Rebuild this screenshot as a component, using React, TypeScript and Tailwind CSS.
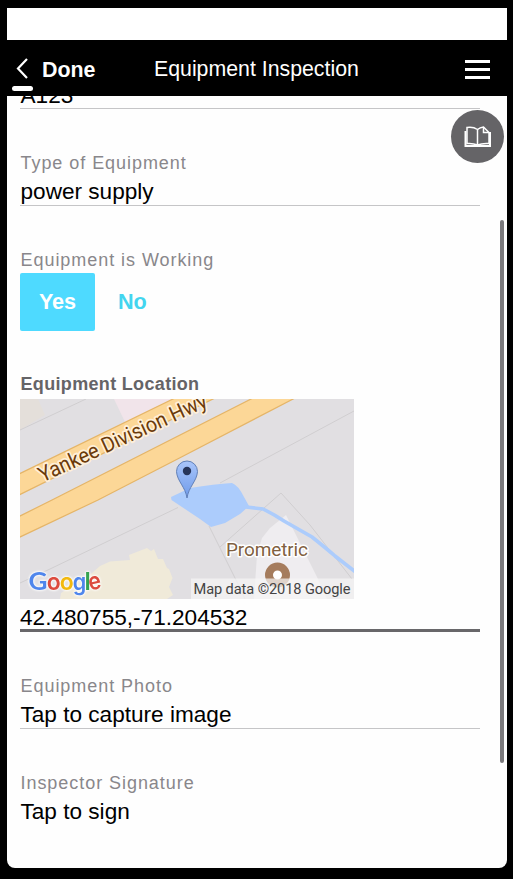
import React from "react";

function LocationMap() {
  return (
    <svg className="block h-[200px] w-[334px] shrink-0" viewBox="20 399 334 200" aria-label="Map">
      <defs>
        <linearGradient id="pin" x1="0" y1="0" x2="0" y2="1">
          <stop offset="0" stopColor="#a9c5fa" />
          <stop offset="1" stopColor="#6f9bea" />
        </linearGradient>
      </defs>
      <rect x="20" y="399" width="334" height="200" fill="#e1dfe2" />
      <path d="M20 399H38L45 415L20 430Z" fill="#e4dfda" />
      <path d="M114 399H175L125 422Z" fill="#f1e4ea" />
      <g fill="none" stroke="#d0ced0" strokeWidth="1">
        <path d="M20 430L86 399" />
        <path d="M354 411L220 483" />
        <path d="M178 507.500L50 569L20 583" />
        <path d="M209 526L237 582L245 599" />
        <path d="M220 547L281 493L310 525L352 579" />
      </g>
      <path d="M19 474L175 398H215L19 495Z" fill="#fcd797" stroke="#e5b568" strokeWidth="1.200" />
      <path d="M19 516.500L52 500L253 398H295L180 457.700L98 500L19 537.500Z" fill="#fcd797" stroke="#e5b568" strokeWidth="1.200" />
      <path d="M60 599L61 593L92 573L100 566L110 561.500L130 560L129 555L147 548L151 551L154 549L158 559L163 559L167 568L169 569L172.500 578L169 587L173 595L167 599Z" fill="#f0ead9" />
      <path d="M286 515L270 528L262 538L257 555L254 599H327L317 577Z" fill="#efedf0" />
      <path d="M171 497L190 488Q215 484 232 483Q238 485 244 497L249 506L240 514L225 523L211 527L200 519L171.500 500Z" fill="#acccfc" />
      <path d="M246 507L263 509Q275 515 284 521L312 537Q327 549 335 556L355 571.500" fill="none" stroke="#acccfc" strokeWidth="3.600" />
      <path d="M187 498C185.500 487 177 481 176.500 471.500A10.500 10.500 0 0 1 197.500 471.500C197 481 188.500 487 187 498Z" fill="url(#pin)" stroke="#6180b8" strokeWidth="1" />
      <circle cx="187" cy="471" r="4.200" fill="#27355a" />
      <text x="0" y="0" transform="translate(42.500 482.500) rotate(-24.700)" textLength="183" lengthAdjust="spacingAndGlyphs" fontFamily="Roboto, sans-serif" fontSize="21.500" fill="#6b3a0a" stroke="#fff0d8" strokeWidth="3.500" strokeLinejoin="round" paintOrder="stroke">Yankee Division Hwy</text>
      <circle cx="277.500" cy="575" r="8.500" fill="#fff" stroke="#a57c5d" strokeWidth="8" />
      <text x="226" y="556" textLength="82" fontFamily="Roboto, sans-serif" fontSize="19" fill="#80603f" stroke="#fff" strokeWidth="3" strokeLinejoin="round" paintOrder="stroke">Prometric</text>
      <rect x="191" y="578.500" width="163" height="21" fill="#f5f5f5" fillOpacity=".72" />
      <text x="193.500" y="594.300" textLength="157" fontFamily="Roboto, sans-serif" fontSize="14.600" fill="#444">Map data ©2018 Google</text>
      <g className="[filter:drop-shadow(0_0_1px_white)_drop-shadow(0_0_1px_white)]" fontFamily="Inter, sans-serif" fontSize="24" fontWeight="600">
        <text x="28.500" y="590" fill="#4f86ec" textLength="19" lengthAdjust="spacingAndGlyphs" fontFamily="Lato, sans-serif" fontSize="25.500" fontWeight="700">G</text>
        <text x="46.700" y="590" fill="#dc4b3e" textLength="14" lengthAdjust="spacingAndGlyphs">o</text>
        <text x="59.700" y="590" fill="#f2b90f" textLength="14" lengthAdjust="spacingAndGlyphs">o</text>
        <text x="72.700" y="590" fill="#4f86ec" textLength="13.500" lengthAdjust="spacingAndGlyphs">g</text>
        <text x="84.500" y="590" fill="#35a352">l</text>
        <text x="0" y="0" transform="translate(90 590.500) rotate(-12)" fill="#dc4b3e" textLength="12.500" lengthAdjust="spacingAndGlyphs">e</text>
      </g>
    </svg>
  );
}

function Field({ label, value, last = false }: { label: string; value: string; last?: boolean }) {
  return (
    <section className="h-[97px] w-[460px]">
      <div className="h-[27px] pt-[2px] pl-[0.5px] text-[18px] leading-[26px] tracking-[0.95px] text-[#89878b]">{label}</div>
      <div className={last ? "h-[31px] pl-[0.5px] text-[22.6px] leading-[33px]" : "h-[31px] border-b border-[#c5c5c7] pl-[0.5px] text-[22.6px] leading-[33px]"}>{value}</div>
    </section>
  );
}

export default function App() {
  return (
    <div className="h-[879px] w-[513px] overflow-hidden bg-black pt-2 pl-[7px] font-['Liberation_Sans',Arial,sans-serif] text-black">
      <div className="relative flex h-[860px] w-[500px] flex-col overflow-hidden rounded-b-[8px] bg-[#fefefe]">
        <div className="h-8 shrink-0 bg-white" />
        <header className="relative z-10 flex h-14 shrink-0 items-center bg-black text-white">
          <svg className="ml-[8px] h-8 w-5 shrink-0" viewBox="0 0 20 32" fill="none" stroke="currentColor" strokeWidth="2.200">
            <path d="M12 7L3 16.500L12 26" />
          </svg>
          <div className="ml-[7px] w-[112px] pt-[3px] text-[21.4px] font-bold leading-7">Done</div>
          <h1 className="w-[205px] whitespace-nowrap pt-[2px] text-[21.3px] leading-7">Equipment Inspection</h1>
          <button aria-label="Menu" className="ml-auto mr-[17px] mt-[3px] flex w-[25px] flex-col gap-[5px]">
            <span className="h-[3px] bg-white" />
            <span className="h-[3px] bg-white" />
            <span className="h-[3px] bg-white" />
          </button>
          <span className="absolute bottom-[5px] left-[5px] h-[5px] w-[21px] rounded-full bg-white" />
        </header>
        <main className="flex min-h-0 flex-1 flex-col overflow-hidden pl-[13px]">
          <div className="-mt-[16px] h-[29px] w-[460px] shrink-0 border-b border-[#c5c5c7] pl-[0.5px] text-[22.6px] leading-[31px]">A123</div>
          <div className="mt-[39px] shrink-0">
            <Field label="Type of Equipment" value="power supply" />
          </div>
          <section className="h-[124px] shrink-0">
            <div className="h-[27px] pt-[2px] pl-[0.5px] text-[18px] leading-[26px] tracking-[0.95px] text-[#89878b]">Equipment is Working</div>
            <div className="flex h-[59px] items-center text-[21.6px] font-bold">
              <div className="flex h-[58px] w-[75px] items-center justify-center rounded-[2px] bg-[#4edaff] pt-[2px] text-white">Yes</div>
              <div className="ml-[23px] pt-[2px] text-[#43d5ef]">No</div>
            </div>
          </section>
          <section className="flex h-[302px] shrink-0 flex-col">
            <h2 className="h-[30px] shrink-0 pt-[2px] pl-[0.5px] text-[18px] font-bold leading-[26px] tracking-[0.33px] text-[#656467]">Equipment Location</h2>
            <LocationMap />
            <div className="h-[33px] w-[460px] shrink-0 border-b-[3px] border-[#68676a] text-[22.6px] leading-[37px]">42.480755,-71.204532</div>
          </section>
          <Field label="Equipment Photo" value="Tap to capture image" />
          <Field label="Inspector Signature" value="Tap to sign" last />
        </main>
        <button aria-label="Forms library" className="absolute left-[444px] top-[102px] flex size-[53px] items-center justify-center rounded-full bg-[#656467]">
          <svg className="h-[22px] w-[27px]" viewBox="0 0 27 22" fill="none" stroke="#fff" strokeWidth="1.500">
            <path d="M1.500 5V20H26V6" strokeWidth="2" />
            <path d="M3 1.500Q9 0.500 13.500 3.500V19Q9 17 3 17.500Z" />
            <path d="M13.500 3.500Q16 1.500 19.500 1L25 6.500V17.500Q18 17 13.500 19" />
            <path d="M19.500 1V6.500H25" />
          </svg>
        </button>
        <div className="absolute left-[493px] top-[212px] h-[543px] w-[4px] rounded-full bg-[#7a797c]" />
      </div>
    </div>
  );
}
